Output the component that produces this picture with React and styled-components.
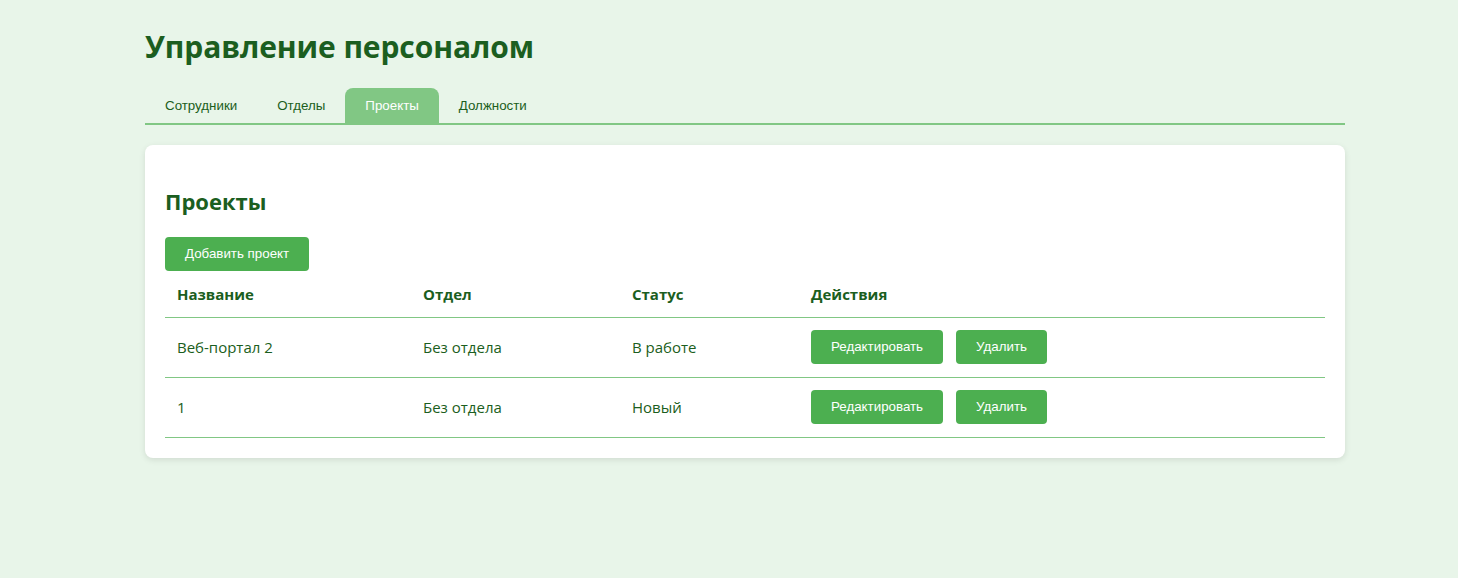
import React from "react";
import styled, { createGlobalStyle } from "styled-components";

const Global = createGlobalStyle`
  html, body { margin: 0; padding: 0; }
  body {
    background: #e8f5e9;
    font-family: "Open Sans", "Noto Sans", sans-serif;
    color: #1b5e20;
  }
`;

const Page = styled.div`
  padding: 0 0 40px 32px;
`;

const Container = styled.div`
  width: 1200px;
  margin: 0 auto;
`;

const Title = styled.h1`
  margin: 0;
  padding: 26px 0 0;
  height: 62px;
  box-sizing: border-box;
  font-size: 30px;
  line-height: 42px;
  font-weight: 700;
  color: #1b5e20;
  letter-spacing: -0.1px;
`;

const Tabs = styled.nav`
  display: flex;
  margin-top: 26px;
  border-bottom: 2px solid #81c784;
`;

const Tab = styled.button`
  border: none;
  background: ${(p) => (p.$active ? "#81c784" : "transparent")};
  color: ${(p) => (p.$active ? "#ffffff" : "#1b5e20")};
  font-family: "Liberation Sans", Arial, sans-serif;
  font-size: 13.33px;
  line-height: 15px;
  padding: 10px 20px;
  border-radius: 8px 8px 0 0;
  cursor: pointer;
`;

const Card = styled.section`
  margin-top: 20px;
  background: #ffffff;
  border-radius: 8px;
  box-shadow: 0 2px 6px rgba(0, 0, 0, 0.1);
  padding: 20px 20px 20px;
`;

const CardTitle = styled.h2`
  margin: 21px 0 21px;
  font-size: 22px;
  line-height: 30px;
  font-weight: 700;
  color: #1b5e20;
`;

const Button = styled.button`
  border: none;
  background: #4caf50;
  color: #ffffff;
  font-family: "Liberation Sans", Arial, sans-serif;
  font-size: 13.33px;
  line-height: 14px;
  padding: 10px 20px;
  border-radius: 4px;
  cursor: pointer;
  margin-right: ${(p) => (p.$gap ? "13px" : "0")};
`;

const Table = styled.table`
  width: 100%;
  border-collapse: collapse;
  table-layout: fixed;
`;

const Th = styled.th`
  text-align: left;
  font-weight: 700;
  font-size: 15px;
  line-height: 22px;
  padding: 12px 12px;
  color: #1b5e20;
  border-bottom: 1px solid #81c784;
  width: ${(p) => p.$w || "auto"};
`;

const Td = styled.td`
  font-size: 15px;
  line-height: 22px;
  padding: 12px 12px 13px;
  height: 34px;
  color: #1b5e20;
  border-bottom: 1px solid #81c784;
  vertical-align: middle;
`;

const Actions = styled.div`
  display: flex;
  align-items: center;
`;

const projects = [
  { name: "Веб-портал 2", dept: "Без отдела", status: "В работе" },
  { name: "1", dept: "Без отдела", status: "Новый" },
];

export default function App() {
  return (
    <>
      <Global />
      <Page>
        <Container>
          <Title>Управление персоналом</Title>
          <Tabs>
            <Tab>Сотрудники</Tab>
            <Tab>Отделы</Tab>
            <Tab $active>Проекты</Tab>
            <Tab>Должности</Tab>
          </Tabs>
          <Card>
            <CardTitle>Проекты</CardTitle>
            <Button>Добавить проект</Button>
            <Table>
              <thead>
                <tr>
                  <Th $w="222px">Название</Th>
                  <Th $w="185px">Отдел</Th>
                  <Th $w="155px">Статус</Th>
                  <Th>Действия</Th>
                </tr>
              </thead>
              <tbody>
                {projects.map((p, i) => (
                  <tr key={i}>
                    <Td>{p.name}</Td>
                    <Td>{p.dept}</Td>
                    <Td>{p.status}</Td>
                    <Td>
                      <Actions>
                        <Button $gap>Редактировать</Button>
                        <Button>Удалить</Button>
                      </Actions>
                    </Td>
                  </tr>
                ))}
              </tbody>
            </Table>
          </Card>
        </Container>
      </Page>
    </>
  );
}
